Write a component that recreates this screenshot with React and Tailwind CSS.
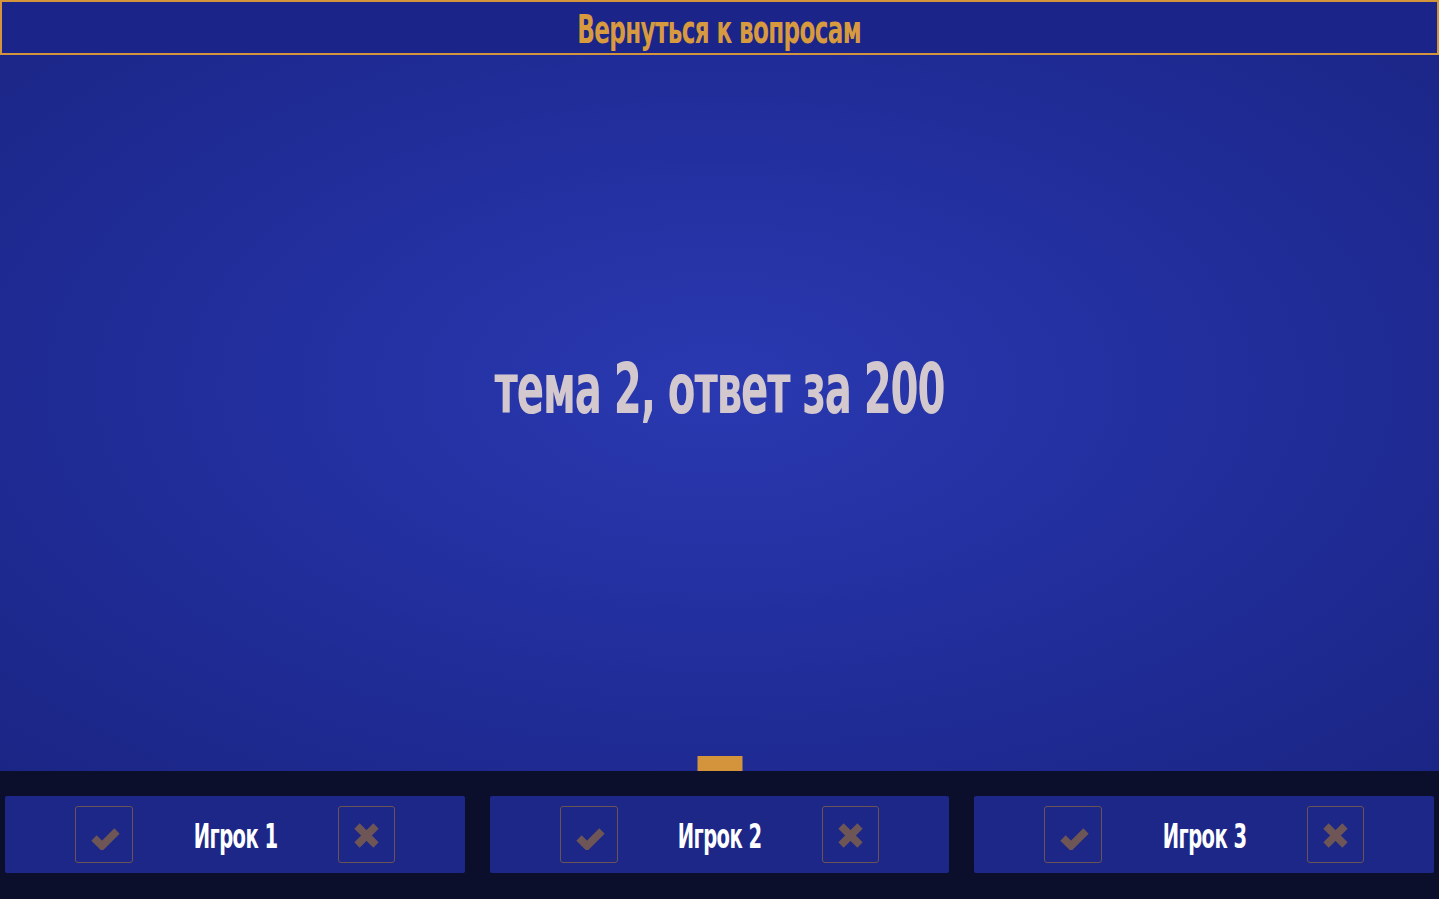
const PLAYERS = ['Игрок 1', 'Игрок 2', 'Игрок 3']

// Oswald-like look: condensed DejaVu squeezed a bit more
const FONT = "font-['DejaVu_Sans_Condensed','DejaVu_Sans',sans-serif] font-bold inline-block whitespace-nowrap"

function CheckIcon() {
  return (
    <svg width="30" height="26" viewBox="0 0 30 26" fill="none">
      <path d="M4 14 L12 22 L27 7" stroke="#6e5656" strokeWidth="7.5" strokeLinejoin="miter" strokeLinecap="butt" />
    </svg>
  )
}

function CrossIcon() {
  return (
    <svg width="27" height="27" viewBox="0 0 27 27" fill="none">
      <path d="M4 4 L23 23 M23 4 L4 23" stroke="#6e5656" strokeWidth="7.5" strokeLinecap="butt" />
    </svg>
  )
}

function PlayerCard({ name }) {
  return (
    <div className="flex-1 h-[77px] bg-[#1c2788] rounded-[2px] flex items-center justify-between px-[70px]">
      <button type="button" className="w-[58px] h-[57px] pt-[4px] pl-[2px] border border-[#6b5353] rounded-[3px] flex items-center justify-center">
        <CheckIcon />
      </button>
      <span className={`${FONT} scale-x-[0.64] text-white text-[34px] leading-none tracking-tight mt-[3px]`}>{name}</span>
      <button type="button" className="w-[57px] h-[57px] pt-[2px] border border-[#6b5353] rounded-[3px] flex items-center justify-center">
        <CrossIcon />
      </button>
    </div>
  )
}

export default function App() {
  return (
    <div className="h-screen w-full flex flex-col bg-[#0b0f2b] overflow-hidden">
      <div className="relative flex-1 flex flex-col bg-[radial-gradient(ellipse_at_center,#2a39b0_0%,#2331a2_35%,#1b2585_100%)]">
        <button
          type="button"
          className="h-[55px] w-full shrink-0 border-2 border-[#d4943b] bg-[#1b2589] flex items-center justify-center pt-[3px]"
        >
          <span className={`${FONT} scale-x-[0.66] text-[#d89a3e] text-[39px] leading-none tracking-tight`}>
            Вернуться к вопросам
          </span>
        </button>
        <div className="flex-1 flex items-center justify-center pb-[48px]">
          <h1 className={`${FONT} scale-x-[0.64] text-[#d3c8cd] text-[70px] leading-none tracking-tight`}>
            тема 2, ответ за 200
          </h1>
        </div>
        <div className="absolute bottom-0 left-1/2 -translate-x-1/2 w-[45px] h-[15px] bg-[#d4943b]" />
      </div>
      <div className="h-[128px] shrink-0 flex gap-[25px] px-[5px] pt-[25px] pb-[26px]">
        {PLAYERS.map((p) => (
          <PlayerCard key={p} name={p} />
        ))}
      </div>
    </div>
  )
}
